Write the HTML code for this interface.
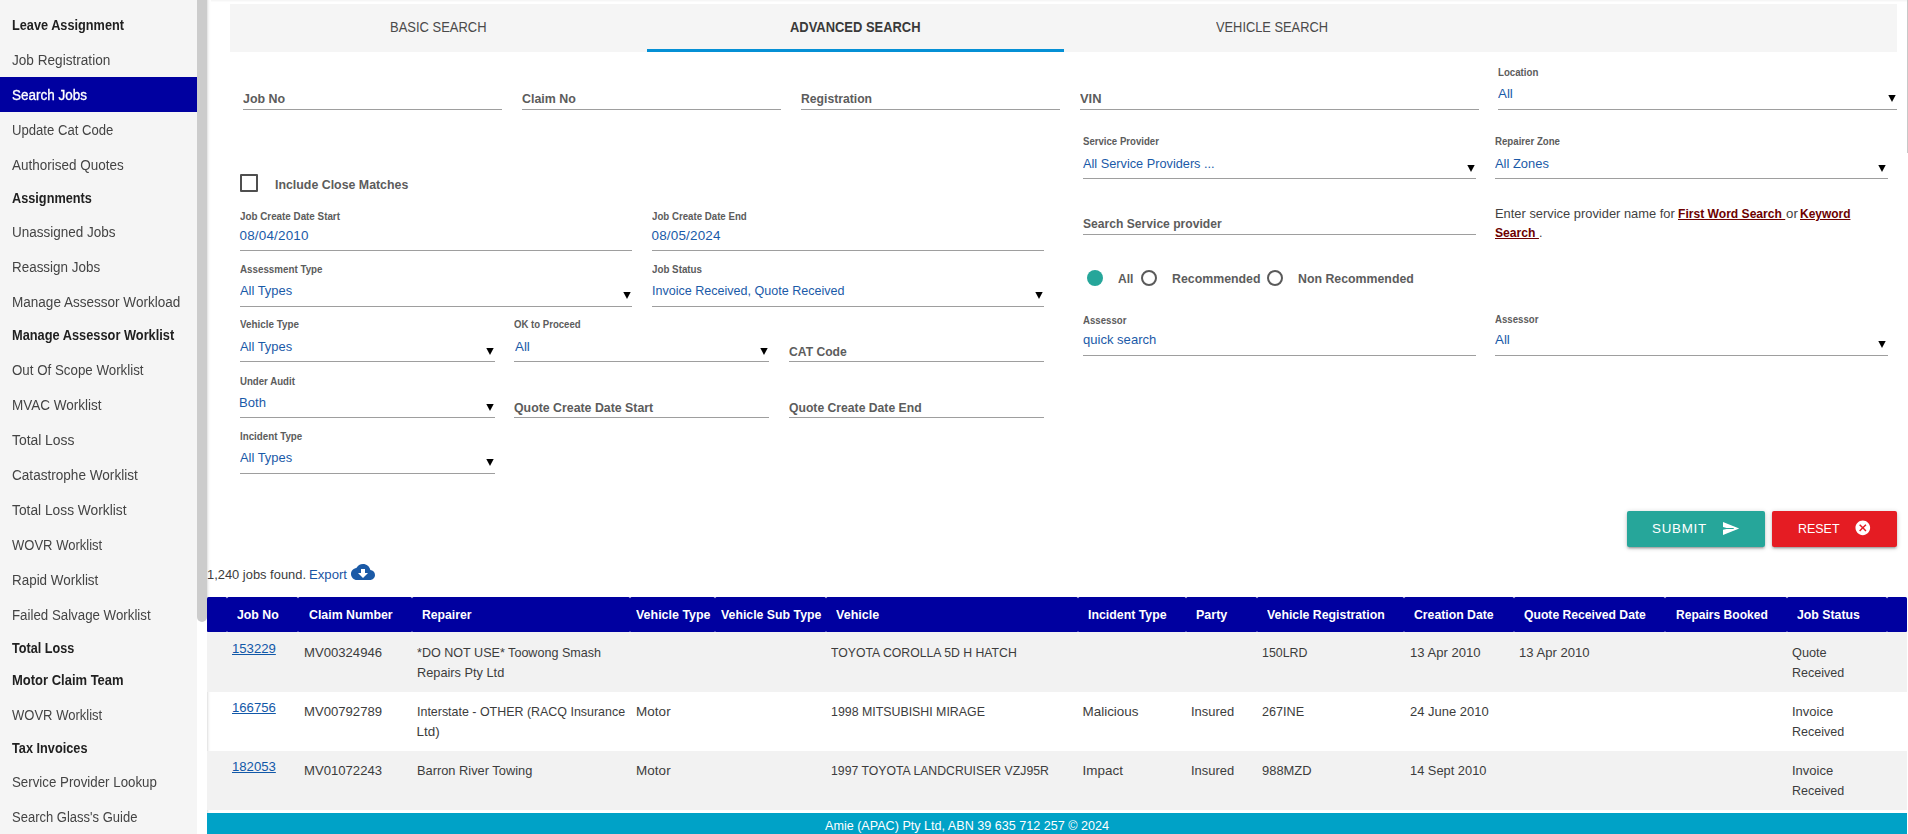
<!DOCTYPE html>
<html><head><meta charset="utf-8"><title>Search Jobs</title>
<style>
html,body{margin:0;padding:0;}
body{width:1908px;height:834px;overflow:hidden;background:#fff;position:relative;font-family:"Liberation Sans", sans-serif;}
.t{position:absolute;white-space:pre;transform-origin:0 0;font-family:"Liberation Sans", sans-serif;}
</style></head><body>
<div style="position:absolute;left:0px;top:0px;width:197px;height:834px;background:#f5f5f5;"></div>
<div style="position:absolute;left:0px;top:77px;width:197px;height:35px;background:#0000a0;"></div>
<div style="position:absolute;left:197px;top:0px;width:10px;height:834px;background:#fff;"></div>
<div style="position:absolute;left:197px;top:-10px;width:10px;height:631.8px;background:#ccc;border-radius:5px;"></div>
<div style="position:absolute;left:207px;top:0px;width:1701px;height:1px;background:#f6f6f6;"></div>
<div style="position:absolute;left:207px;top:1px;width:1701px;height:1px;background:#fbfbfb;"></div>
<div style="position:absolute;left:207px;top:0px;width:1px;height:834px;background:#e7e7e7;"></div>
<div style="position:absolute;left:208px;top:0px;width:1px;height:834px;background:#f4f4f4;"></div>
<div style="position:absolute;left:209px;top:0px;width:1px;height:834px;background:#fbfbfb;"></div>
<div style="position:absolute;left:210px;top:0px;width:1px;height:834px;background:#fefefe;"></div>
<div style="position:absolute;left:1907px;top:0px;width:1px;height:153px;background:#c8c8c8;"></div>
<div style="position:absolute;left:230px;top:4px;width:1667px;height:48px;background:#f5f5f5;"></div>
<div style="position:absolute;left:647px;top:49px;width:417px;height:3px;background:#0590d5;"></div>
<div style="position:absolute;left:243px;top:109px;width:259px;height:1px;background:#9e9e9e;"></div>
<div style="position:absolute;left:522px;top:109px;width:259px;height:1px;background:#9e9e9e;"></div>
<div style="position:absolute;left:801px;top:109px;width:259px;height:1px;background:#9e9e9e;"></div>
<div style="position:absolute;left:1080px;top:109px;width:398.5px;height:1px;background:#9e9e9e;"></div>
<div style="position:absolute;left:240px;top:174.2px;width:13.8px;height:13.4px;border:2px solid #4f4f4f;border-radius:1px;"></div>
<div style="position:absolute;left:240px;top:250px;width:391.8px;height:1px;background:#9e9e9e;"></div>
<div style="position:absolute;left:652px;top:250px;width:391.6px;height:1px;background:#9e9e9e;"></div>
<div style="position:absolute;left:240px;top:306px;width:391.8px;height:1px;background:#9e9e9e;"></div>
<svg style="position:absolute;left:622.7px;top:291.8px" width="8" height="8" viewBox="0 0 8 8"><path d="M0.3 0 L7.7 0 L4 7 Z" fill="#000"/></svg>
<div style="position:absolute;left:652px;top:306px;width:391.6px;height:1px;background:#9e9e9e;"></div>
<svg style="position:absolute;left:1034.7px;top:291.8px" width="8" height="8" viewBox="0 0 8 8"><path d="M0.3 0 L7.7 0 L4 7 Z" fill="#000"/></svg>
<div style="position:absolute;left:240px;top:361px;width:254.8px;height:1px;background:#9e9e9e;"></div>
<svg style="position:absolute;left:485.5px;top:347.5px" width="8" height="8" viewBox="0 0 8 8"><path d="M0.3 0 L7.7 0 L4 7 Z" fill="#000"/></svg>
<div style="position:absolute;left:514.4px;top:361px;width:254.4px;height:1px;background:#9e9e9e;"></div>
<svg style="position:absolute;left:759.9px;top:347.5px" width="8" height="8" viewBox="0 0 8 8"><path d="M0.3 0 L7.7 0 L4 7 Z" fill="#000"/></svg>
<div style="position:absolute;left:788.8px;top:361px;width:254.8px;height:1px;background:#9e9e9e;"></div>
<div style="position:absolute;left:240px;top:417px;width:254.8px;height:1px;background:#9e9e9e;"></div>
<svg style="position:absolute;left:485.5px;top:403.6px" width="8" height="8" viewBox="0 0 8 8"><path d="M0.3 0 L7.7 0 L4 7 Z" fill="#000"/></svg>
<div style="position:absolute;left:514.4px;top:417px;width:254.4px;height:1px;background:#9e9e9e;"></div>
<div style="position:absolute;left:788.8px;top:417px;width:254.8px;height:1px;background:#9e9e9e;"></div>
<div style="position:absolute;left:240px;top:473px;width:254.8px;height:1px;background:#9e9e9e;"></div>
<svg style="position:absolute;left:485.5px;top:458.8px" width="8" height="8" viewBox="0 0 8 8"><path d="M0.3 0 L7.7 0 L4 7 Z" fill="#000"/></svg>
<div style="position:absolute;left:1498px;top:109px;width:398.7px;height:1px;background:#9e9e9e;"></div>
<svg style="position:absolute;left:1888.3px;top:94.8px" width="8" height="8" viewBox="0 0 8 8"><path d="M0.3 0 L7.7 0 L4 7 Z" fill="#000"/></svg>
<div style="position:absolute;left:1083.3px;top:178px;width:392.6px;height:1px;background:#9e9e9e;"></div>
<svg style="position:absolute;left:1466.5px;top:164.8px" width="8" height="8" viewBox="0 0 8 8"><path d="M0.3 0 L7.7 0 L4 7 Z" fill="#000"/></svg>
<div style="position:absolute;left:1495px;top:178px;width:392.8px;height:1px;background:#9e9e9e;"></div>
<svg style="position:absolute;left:1878.4px;top:164.8px" width="8" height="8" viewBox="0 0 8 8"><path d="M0.3 0 L7.7 0 L4 7 Z" fill="#000"/></svg>
<div style="position:absolute;left:1083.3px;top:234px;width:392.6px;height:1px;background:#9e9e9e;"></div>
<div style="position:absolute;left:1086.7px;top:269.7px;width:16.6px;height:16.6px;border-radius:50%;background:#26a69a;"></div>
<div style="position:absolute;left:1141px;top:270px;width:12px;height:12px;border-radius:50%;border:2px solid #5a5a5a;"></div>
<div style="position:absolute;left:1267px;top:270px;width:12px;height:12px;border-radius:50%;border:2px solid #5a5a5a;"></div>
<div style="position:absolute;left:1083.3px;top:355px;width:392.7px;height:1px;background:#9e9e9e;"></div>
<div style="position:absolute;left:1495px;top:355px;width:393px;height:1px;background:#9e9e9e;"></div>
<svg style="position:absolute;left:1878.2px;top:340.8px" width="8" height="8" viewBox="0 0 8 8"><path d="M0.3 0 L7.7 0 L4 7 Z" fill="#000"/></svg>
<div style="position:absolute;left:1627px;top:511px;width:138px;height:35.5px;background:#26a69a;box-shadow:0 2px 2px 0 rgba(0,0,0,.14),0 3px 1px -2px rgba(0,0,0,.12),0 1px 5px 0 rgba(0,0,0,.2);border-radius:2px;"></div>
<div style="position:absolute;left:1772px;top:511px;width:125px;height:35.5px;background:#e51c23;box-shadow:0 2px 2px 0 rgba(0,0,0,.14),0 3px 1px -2px rgba(0,0,0,.12),0 1px 5px 0 rgba(0,0,0,.2);border-radius:2px;"></div>
<svg style="position:absolute;left:1722px;top:521px" width="18" height="15" viewBox="0 0 18 15"><path d="M1 0.9 L17.2 7.45 L1 14 L1 8.8 L4.5 8 L11.7 7.9 L11.7 7 L4.5 6.9 L1 6.1 Z" fill="#fff"/></svg>
<svg style="position:absolute;left:1853.7px;top:519.2px" width="17.6" height="17.6" viewBox="0 0 24 24"><path d="M12 2C6.47 2 2 6.47 2 12s4.47 10 10 10 10-4.47 10-10S17.53 2 12 2zm5 13.59L15.59 17 12 13.41 8.41 17 7 15.59 10.59 12 7 8.41 8.41 7 12 10.59 15.59 7 17 8.41 13.41 12 17 15.59z" fill="#fff"/></svg>
<svg style="position:absolute;left:351px;top:560px" width="24" height="24" viewBox="0 0 24 24"><path d="M19.35 10.04C18.67 6.59 15.64 4 12 4 9.11 4 6.6 5.64 5.35 8.04 2.34 8.36 0 10.91 0 14c0 3.31 2.69 6 6 6h13c2.76 0 5-2.24 5-5 0-2.64-2.05-4.78-4.65-4.96zM17 13l-5 5-5-5h3V9h4v4h3z" fill="#1b5aa6"/></svg>
<div style="position:absolute;left:207px;top:597px;width:20px;height:35px;background:#0000a0;border-radius:1.5px 1.5px 1px 1px;"></div>
<div style="position:absolute;left:227px;top:597px;width:71px;height:35px;background:#0000a0;border-radius:1.5px 1.5px 1px 1px;"></div>
<div style="position:absolute;left:298px;top:597px;width:114px;height:35px;background:#0000a0;border-radius:1.5px 1.5px 1px 1px;"></div>
<div style="position:absolute;left:412px;top:597px;width:218px;height:35px;background:#0000a0;border-radius:1.5px 1.5px 1px 1px;"></div>
<div style="position:absolute;left:630px;top:597px;width:85px;height:35px;background:#0000a0;border-radius:1.5px 1.5px 1px 1px;"></div>
<div style="position:absolute;left:715px;top:597px;width:111px;height:35px;background:#0000a0;border-radius:1.5px 1.5px 1px 1px;"></div>
<div style="position:absolute;left:826px;top:597px;width:252px;height:35px;background:#0000a0;border-radius:1.5px 1.5px 1px 1px;"></div>
<div style="position:absolute;left:1078px;top:597px;width:108px;height:35px;background:#0000a0;border-radius:1.5px 1.5px 1px 1px;"></div>
<div style="position:absolute;left:1186px;top:597px;width:71px;height:35px;background:#0000a0;border-radius:1.5px 1.5px 1px 1px;"></div>
<div style="position:absolute;left:1257px;top:597px;width:147px;height:35px;background:#0000a0;border-radius:1.5px 1.5px 1px 1px;"></div>
<div style="position:absolute;left:1404px;top:597px;width:110px;height:35px;background:#0000a0;border-radius:1.5px 1.5px 1px 1px;"></div>
<div style="position:absolute;left:1514px;top:597px;width:151px;height:35px;background:#0000a0;border-radius:1.5px 1.5px 1px 1px;"></div>
<div style="position:absolute;left:1665px;top:597px;width:122px;height:35px;background:#0000a0;border-radius:1.5px 1.5px 1px 1px;"></div>
<div style="position:absolute;left:1787px;top:597px;width:100px;height:35px;background:#0000a0;border-radius:1.5px 1.5px 1px 1px;"></div>
<div style="position:absolute;left:1887px;top:597px;width:20px;height:35px;background:#0000a0;border-radius:1.5px 1.5px 1px 1px;"></div>
<div style="position:absolute;left:207px;top:632px;width:1700px;height:60px;background:#f2f2f2;"></div>
<div style="position:absolute;left:207px;top:751px;width:1700px;height:59px;background:#f2f2f2;"></div>
<div style="position:absolute;left:207px;top:813px;width:1700px;height:21px;background:#00a2c7;"></div>
<div style="position:absolute;left:0;top:0;width:197px;height:834px;will-change:transform;">
<span class="t" style="left:12px;top:17px;font-size:13.91px;line-height:16px;color:#212121;font-weight:700;transform:scaleX(0.9155);">Leave Assignment</span>
<span class="t" style="left:12px;top:52px;font-size:13.91px;line-height:16px;color:#444;transform:scaleX(0.9782);">Job Registration</span>
<span class="t" style="left:12px;top:87px;font-size:13.91px;line-height:16px;color:#fff;transform:scaleX(0.9693);-webkit-text-stroke:0.3px #fff;">Search Jobs</span>
<span class="t" style="left:12px;top:122px;font-size:13.91px;line-height:16px;color:#444;transform:scaleX(0.9433);">Update Cat Code</span>
<span class="t" style="left:12px;top:157px;font-size:13.91px;line-height:16px;color:#444;transform:scaleX(0.9693);">Authorised Quotes</span>
<span class="t" style="left:12px;top:190px;font-size:13.91px;line-height:16px;color:#212121;font-weight:700;transform:scaleX(0.9145);">Assignments</span>
<span class="t" style="left:12px;top:224px;font-size:13.91px;line-height:16px;color:#444;transform:scaleX(0.9713);">Unassigned Jobs</span>
<span class="t" style="left:12px;top:259px;font-size:13.91px;line-height:16px;color:#444;transform:scaleX(0.9661);">Reassign Jobs</span>
<span class="t" style="left:12px;top:294px;font-size:13.91px;line-height:16px;color:#444;transform:scaleX(0.9735);">Manage Assessor Workload</span>
<span class="t" style="left:12px;top:327px;font-size:13.91px;line-height:16px;color:#212121;font-weight:700;transform:scaleX(0.9207);">Manage Assessor Worklist</span>
<span class="t" style="left:12px;top:362px;font-size:13.91px;line-height:16px;color:#444;transform:scaleX(0.9580);">Out Of Scope Worklist</span>
<span class="t" style="left:12px;top:397px;font-size:13.91px;line-height:16px;color:#444;transform:scaleX(0.9719);">MVAC Worklist</span>
<span class="t" style="left:12px;top:432px;font-size:13.91px;line-height:16px;color:#444;letter-spacing:-0.02px;">Total Loss</span>
<span class="t" style="left:12px;top:467px;font-size:13.91px;line-height:16px;color:#444;transform:scaleX(0.9765);">Catastrophe Worklist</span>
<span class="t" style="left:12px;top:502px;font-size:13.91px;line-height:16px;color:#444;transform:scaleX(0.9907);">Total Loss Worklist</span>
<span class="t" style="left:12px;top:537px;font-size:13.91px;line-height:16px;color:#444;transform:scaleX(0.9369);">WOVR Worklist</span>
<span class="t" style="left:12px;top:572px;font-size:13.91px;line-height:16px;color:#444;transform:scaleX(0.9657);">Rapid Worklist</span>
<span class="t" style="left:12px;top:607px;font-size:13.91px;line-height:16px;color:#444;transform:scaleX(0.9557);">Failed Salvage Worklist</span>
<span class="t" style="left:12px;top:640px;font-size:13.91px;line-height:16px;color:#212121;font-weight:700;transform:scaleX(0.9101);">Total Loss</span>
<span class="t" style="left:12px;top:672px;font-size:13.91px;line-height:16px;color:#212121;font-weight:700;transform:scaleX(0.9340);">Motor Claim Team</span>
<span class="t" style="left:12px;top:707px;font-size:13.91px;line-height:16px;color:#444;transform:scaleX(0.9369);">WOVR Worklist</span>
<span class="t" style="left:12px;top:740px;font-size:13.91px;line-height:16px;color:#212121;font-weight:700;transform:scaleX(0.9161);">Tax Invoices</span>
<span class="t" style="left:12px;top:774px;font-size:13.91px;line-height:16px;color:#444;transform:scaleX(0.9562);">Service Provider Lookup</span>
<span class="t" style="left:12px;top:809px;font-size:13.91px;line-height:16px;color:#444;transform:scaleX(0.9355);">Search Glass&#x27;s Guide</span>
</div>
<span class="t" style="left:390px;top:19px;font-size:13.91px;line-height:16px;color:#4a4a4a;transform:scaleX(0.9318);">BASIC SEARCH</span>
<span class="t" style="left:790px;top:19px;font-size:13.91px;line-height:16px;color:#3a3a3a;font-weight:700;transform:scaleX(0.9298);">ADVANCED SEARCH</span>
<span class="t" style="left:1215.5px;top:19px;font-size:13.91px;line-height:16px;color:#4a4a4a;transform:scaleX(0.9231);">VEHICLE SEARCH</span>
<span class="t" style="left:242.5px;top:91px;font-size:13.44px;line-height:15px;color:#5c5c5c;font-weight:700;transform:scaleX(0.9242);">Job No</span>
<span class="t" style="left:521.5px;top:91px;font-size:13.44px;line-height:15px;color:#5c5c5c;font-weight:700;transform:scaleX(0.9225);">Claim No</span>
<span class="t" style="left:801px;top:91px;font-size:13.44px;line-height:15px;color:#5c5c5c;font-weight:700;transform:scaleX(0.9065);">Registration</span>
<span class="t" style="left:1080px;top:91px;font-size:13.44px;line-height:15px;color:#5c5c5c;font-weight:700;transform:scaleX(0.9589);">VIN</span>
<span class="t" style="left:274.5px;top:177px;font-size:13.44px;line-height:15px;color:#5c5c5c;font-weight:700;transform:scaleX(0.9202);">Include Close Matches</span>
<span class="t" style="left:240px;top:210px;font-size:10.75px;line-height:12px;color:#5c5c5c;font-weight:700;transform:scaleX(0.9144);">Job Create Date Start</span>
<span class="t" style="left:239.5px;top:228px;font-size:13.44px;line-height:15px;color:#1a5aa8;letter-spacing:0.19px;">08/04/2010</span>
<span class="t" style="left:652px;top:210px;font-size:10.75px;line-height:12px;color:#5c5c5c;font-weight:700;transform:scaleX(0.9010);">Job Create Date End</span>
<span class="t" style="left:651.5px;top:228px;font-size:13.44px;line-height:15px;color:#1a5aa8;letter-spacing:0.19px;">08/05/2024</span>
<span class="t" style="left:239.5px;top:263px;font-size:10.75px;line-height:12px;color:#5c5c5c;font-weight:700;transform:scaleX(0.9103);">Assessment Type</span>
<span class="t" style="left:239.8px;top:283px;font-size:13.44px;line-height:15px;color:#1a5aa8;transform:scaleX(0.9606);">All Types</span>
<span class="t" style="left:652px;top:263px;font-size:10.75px;line-height:12px;color:#5c5c5c;font-weight:700;transform:scaleX(0.9104);">Job Status</span>
<span class="t" style="left:651.5px;top:283px;font-size:13.44px;line-height:15px;color:#1a5aa8;transform:scaleX(0.9338);">Invoice Received, Quote Received</span>
<span class="t" style="left:239.5px;top:318px;font-size:10.75px;line-height:12px;color:#5c5c5c;font-weight:700;transform:scaleX(0.9155);">Vehicle Type</span>
<span class="t" style="left:239.8px;top:339px;font-size:13.44px;line-height:15px;color:#1a5aa8;transform:scaleX(0.9606);">All Types</span>
<span class="t" style="left:514.4px;top:318px;font-size:10.75px;line-height:12px;color:#5c5c5c;font-weight:700;transform:scaleX(0.8920);">OK to Proceed</span>
<span class="t" style="left:514.6px;top:339px;font-size:13.44px;line-height:15px;color:#1a5aa8;transform:scaleX(0.9916);">All</span>
<span class="t" style="left:788.5px;top:344px;font-size:13.44px;line-height:15px;color:#5c5c5c;font-weight:700;transform:scaleX(0.9037);">CAT Code</span>
<span class="t" style="left:240px;top:375px;font-size:10.75px;line-height:12px;color:#5c5c5c;font-weight:700;transform:scaleX(0.8975);">Under Audit</span>
<span class="t" style="left:239px;top:395px;font-size:13.44px;line-height:15px;color:#1a5aa8;transform:scaleX(0.9740);">Both</span>
<span class="t" style="left:514px;top:400px;font-size:13.44px;line-height:15px;color:#5c5c5c;font-weight:700;transform:scaleX(0.9182);">Quote Create Date Start</span>
<span class="t" style="left:788.5px;top:400px;font-size:13.44px;line-height:15px;color:#5c5c5c;font-weight:700;transform:scaleX(0.9058);">Quote Create Date End</span>
<span class="t" style="left:240px;top:430px;font-size:10.75px;line-height:12px;color:#5c5c5c;font-weight:700;transform:scaleX(0.9088);">Incident Type</span>
<span class="t" style="left:239.8px;top:450px;font-size:13.44px;line-height:15px;color:#1a5aa8;transform:scaleX(0.9606);">All Types</span>
<span class="t" style="left:1498px;top:66px;font-size:10.75px;line-height:12px;color:#5c5c5c;font-weight:700;transform:scaleX(0.9002);">Location</span>
<span class="t" style="left:1498.3px;top:86px;font-size:13.44px;line-height:15px;color:#1a5aa8;transform:scaleX(0.9916);">All</span>
<span class="t" style="left:1083px;top:135px;font-size:10.75px;line-height:12px;color:#5c5c5c;font-weight:700;transform:scaleX(0.8943);">Service Provider</span>
<span class="t" style="left:1083.3px;top:156px;font-size:13.44px;line-height:15px;color:#1a5aa8;transform:scaleX(0.9478);">All Service Providers ...</span>
<span class="t" style="left:1495px;top:135px;font-size:10.75px;line-height:12px;color:#5c5c5c;font-weight:700;transform:scaleX(0.8991);">Repairer Zone</span>
<span class="t" style="left:1495.2px;top:156px;font-size:13.44px;line-height:15px;color:#1a5aa8;transform:scaleX(0.9621);">All Zones</span>
<span class="t" style="left:1082.5px;top:216px;font-size:13.44px;line-height:15px;color:#5c5c5c;font-weight:700;transform:scaleX(0.9012);">Search Service provider</span>
<span class="t" style="left:1494.5px;top:206px;font-size:13.44px;line-height:15px;color:#424242;transform:scaleX(0.9591);">Enter service provider name for </span>
<span class="t" style="left:1678px;top:206px;font-size:13.44px;line-height:15px;color:#6d0000;font-weight:700;transform:scaleX(0.8996);text-decoration:underline;">First Word Search </span>
<span class="t" style="left:1786px;top:206px;font-size:13.44px;line-height:15px;color:#424242;transform:scaleX(0.9895);">or</span>
<span class="t" style="left:1800.3px;top:206px;font-size:13.44px;line-height:15px;color:#6d0000;font-weight:700;transform:scaleX(0.8888);text-decoration:underline;">Keyword</span>
<span class="t" style="left:1494.5px;top:225px;font-size:13.44px;line-height:15px;color:#6d0000;font-weight:700;transform:scaleX(0.9044);text-decoration:underline;">Search </span>
<span class="t" style="left:1539px;top:225px;font-size:13.44px;line-height:15px;color:#424242;transform:scaleX(0.9205);">.</span>
<span class="t" style="left:1118px;top:271px;font-size:13.44px;line-height:15px;color:#5c5c5c;font-weight:700;transform:scaleX(0.8963);">All</span>
<span class="t" style="left:1171.5px;top:271px;font-size:13.44px;line-height:15px;color:#5c5c5c;font-weight:700;transform:scaleX(0.9189);">Recommended</span>
<span class="t" style="left:1298px;top:271px;font-size:13.44px;line-height:15px;color:#5c5c5c;font-weight:700;transform:scaleX(0.9178);">Non Recommended</span>
<span class="t" style="left:1083px;top:314px;font-size:10.75px;line-height:12px;color:#5c5c5c;font-weight:700;transform:scaleX(0.8967);">Assessor</span>
<span class="t" style="left:1082.5px;top:332px;font-size:13.44px;line-height:15px;color:#1a5aa8;transform:scaleX(0.9712);">quick search</span>
<span class="t" style="left:1495px;top:313px;font-size:10.75px;line-height:12px;color:#5c5c5c;font-weight:700;transform:scaleX(0.8967);">Assessor</span>
<span class="t" style="left:1495.2px;top:332px;font-size:13.44px;line-height:15px;color:#1a5aa8;transform:scaleX(0.9916);">All</span>
<span class="t" style="left:1652px;top:521px;font-size:13.39px;line-height:15px;color:#fff;letter-spacing:0.74px;">SUBMIT</span>
<span class="t" style="left:1797.5px;top:521px;font-size:13.39px;line-height:15px;color:#fff;transform:scaleX(0.9306);">RESET</span>
<span class="t" style="left:207px;top:567px;font-size:13.44px;line-height:15px;color:#3c3c3c;transform:scaleX(0.9601);">1,240 jobs found.</span>
<span class="t" style="left:309.3px;top:567px;font-size:13.44px;line-height:15px;color:#1a55a4;transform:scaleX(0.9783);">Export</span>
<span class="t" style="left:237px;top:607px;font-size:13.44px;line-height:15px;color:#fff;font-weight:700;transform:scaleX(0.9146);">Job No</span>
<span class="t" style="left:308.5px;top:607px;font-size:13.44px;line-height:15px;color:#fff;font-weight:700;transform:scaleX(0.9182);">Claim Number</span>
<span class="t" style="left:421.5px;top:607px;font-size:13.44px;line-height:15px;color:#fff;font-weight:700;transform:scaleX(0.9074);">Repairer</span>
<span class="t" style="left:636px;top:607px;font-size:13.44px;line-height:15px;color:#fff;font-weight:700;transform:scaleX(0.9266);">Vehicle Type</span>
<span class="t" style="left:720.5px;top:607px;font-size:13.44px;line-height:15px;color:#fff;font-weight:700;transform:scaleX(0.9161);">Vehicle Sub Type</span>
<span class="t" style="left:835.5px;top:607px;font-size:13.44px;line-height:15px;color:#fff;font-weight:700;transform:scaleX(0.9325);">Vehicle</span>
<span class="t" style="left:1088px;top:607px;font-size:13.44px;line-height:15px;color:#fff;font-weight:700;transform:scaleX(0.9186);">Incident Type</span>
<span class="t" style="left:1196px;top:607px;font-size:13.44px;line-height:15px;color:#fff;font-weight:700;transform:scaleX(0.9308);">Party</span>
<span class="t" style="left:1267px;top:607px;font-size:13.44px;line-height:15px;color:#fff;font-weight:700;transform:scaleX(0.9162);">Vehicle Registration</span>
<span class="t" style="left:1414px;top:607px;font-size:13.44px;line-height:15px;color:#fff;font-weight:700;transform:scaleX(0.9117);">Creation Date</span>
<span class="t" style="left:1524px;top:607px;font-size:13.44px;line-height:15px;color:#fff;font-weight:700;transform:scaleX(0.9055);">Quote Received Date</span>
<span class="t" style="left:1675.5px;top:607px;font-size:13.44px;line-height:15px;color:#fff;font-weight:700;transform:scaleX(0.8978);">Repairs Booked</span>
<span class="t" style="left:1797px;top:607px;font-size:13.44px;line-height:15px;color:#fff;font-weight:700;transform:scaleX(0.9152);">Job Status</span>
<span class="t" style="left:232px;top:641px;font-size:13.44px;line-height:15px;color:#1158a8;transform:scaleX(0.9777);text-decoration:underline;">153229</span>
<span class="t" style="left:303.5px;top:645px;font-size:13.44px;line-height:15px;color:#3c3c3c;transform:scaleX(0.9765);">MV00324946</span>
<span class="t" style="left:416.5px;top:645px;font-size:13.44px;line-height:15px;color:#3c3c3c;transform:scaleX(0.9360);">*DO NOT USE* Toowong Smash</span>
<span class="t" style="left:416.5px;top:665px;font-size:13.44px;line-height:15px;color:#3c3c3c;transform:scaleX(0.9500);">Repairs Pty Ltd</span>
<span class="t" style="left:831px;top:645px;font-size:13.44px;line-height:15px;color:#3c3c3c;transform:scaleX(0.9111);">TOYOTA COROLLA 5D H HATCH</span>
<span class="t" style="left:1262px;top:645px;font-size:13.44px;line-height:15px;color:#3c3c3c;transform:scaleX(0.9221);">150LRD</span>
<span class="t" style="left:1409.5px;top:645px;font-size:13.44px;line-height:15px;color:#3c3c3c;transform:scaleX(0.9724);">13 Apr 2010</span>
<span class="t" style="left:1519px;top:645px;font-size:13.44px;line-height:15px;color:#3c3c3c;transform:scaleX(0.9724);">13 Apr 2010</span>
<span class="t" style="left:1792px;top:645px;font-size:13.44px;line-height:15px;color:#3c3c3c;transform:scaleX(0.9471);">Quote</span>
<span class="t" style="left:1792px;top:665px;font-size:13.44px;line-height:15px;color:#3c3c3c;transform:scaleX(0.9317);">Received</span>
<span class="t" style="left:232px;top:700px;font-size:13.44px;line-height:15px;color:#1158a8;transform:scaleX(0.9777);text-decoration:underline;">166756</span>
<span class="t" style="left:303.5px;top:704px;font-size:13.44px;line-height:15px;color:#3c3c3c;transform:scaleX(0.9765);">MV00792789</span>
<span class="t" style="left:416.5px;top:704px;font-size:13.44px;line-height:15px;color:#3c3c3c;transform:scaleX(0.9258);">Interstate - OTHER (RACQ Insurance</span>
<span class="t" style="left:416.5px;top:724px;font-size:13.44px;line-height:15px;color:#3c3c3c;letter-spacing:-0.01px;">Ltd)</span>
<span class="t" style="left:636px;top:704px;font-size:13.44px;line-height:15px;color:#3c3c3c;letter-spacing:0.07px;">Motor</span>
<span class="t" style="left:831px;top:704px;font-size:13.44px;line-height:15px;color:#3c3c3c;transform:scaleX(0.9200);">1998 MITSUBISHI MIRAGE</span>
<span class="t" style="left:1082.5px;top:704px;font-size:13.44px;line-height:15px;color:#3c3c3c;">Malicious</span>
<span class="t" style="left:1190.5px;top:704px;font-size:13.44px;line-height:15px;color:#3c3c3c;transform:scaleX(0.9617);">Insured</span>
<span class="t" style="left:1262px;top:704px;font-size:13.44px;line-height:15px;color:#3c3c3c;transform:scaleX(0.9397);">267INE</span>
<span class="t" style="left:1409.5px;top:704px;font-size:13.44px;line-height:15px;color:#3c3c3c;transform:scaleX(0.9662);">24 June 2010</span>
<span class="t" style="left:1792px;top:704px;font-size:13.44px;line-height:15px;color:#3c3c3c;transform:scaleX(0.9677);">Invoice</span>
<span class="t" style="left:1792px;top:724px;font-size:13.44px;line-height:15px;color:#3c3c3c;transform:scaleX(0.9317);">Received</span>
<span class="t" style="left:232px;top:759px;font-size:13.44px;line-height:15px;color:#1158a8;transform:scaleX(0.9777);text-decoration:underline;">182053</span>
<span class="t" style="left:303.5px;top:763px;font-size:13.44px;line-height:15px;color:#3c3c3c;transform:scaleX(0.9765);">MV01072243</span>
<span class="t" style="left:416.5px;top:763px;font-size:13.44px;line-height:15px;color:#3c3c3c;transform:scaleX(0.9547);">Barron River Towing</span>
<span class="t" style="left:636px;top:763px;font-size:13.44px;line-height:15px;color:#3c3c3c;letter-spacing:0.07px;">Motor</span>
<span class="t" style="left:831px;top:763px;font-size:13.44px;line-height:15px;color:#3c3c3c;transform:scaleX(0.9116);">1997 TOYOTA LANDCRUISER VZJ95R</span>
<span class="t" style="left:1082.5px;top:763px;font-size:13.44px;line-height:15px;color:#3c3c3c;letter-spacing:0.01px;">Impact</span>
<span class="t" style="left:1190.5px;top:763px;font-size:13.44px;line-height:15px;color:#3c3c3c;transform:scaleX(0.9617);">Insured</span>
<span class="t" style="left:1262px;top:763px;font-size:13.44px;line-height:15px;color:#3c3c3c;transform:scaleX(0.9624);">988MZD</span>
<span class="t" style="left:1409.5px;top:763px;font-size:13.44px;line-height:15px;color:#3c3c3c;transform:scaleX(0.9562);">14 Sept 2010</span>
<span class="t" style="left:1792px;top:763px;font-size:13.44px;line-height:15px;color:#3c3c3c;transform:scaleX(0.9677);">Invoice</span>
<span class="t" style="left:1792px;top:783px;font-size:13.44px;line-height:15px;color:#3c3c3c;transform:scaleX(0.9317);">Received</span>
<span class="t" style="left:824.5px;top:818px;font-size:13.44px;line-height:15px;color:#fff;transform:scaleX(0.9366);">Amie (APAC) Pty Ltd, ABN 39 635 712 257 © 2024</span>
</body></html>
